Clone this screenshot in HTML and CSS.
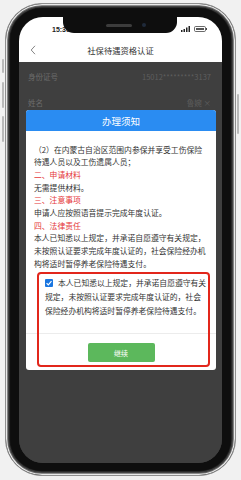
FILE: index.html
```html
<!DOCTYPE html>
<html lang="zh-CN">
<head>
<meta charset="utf-8">
<title>社保待遇资格认证</title>
<link rel="stylesheet" href="styles.css">
</head>
<body>
<div class="stage">
  <div class="phone">
    <span class="side-btn side-btn-a"></span>
    <span class="side-btn side-btn-b"></span>
    <span class="side-btn side-btn-c"></span>
    <span class="side-btn side-btn-r"></span>
    <div class="screen">
      <div class="notch"><span class="speaker"></span><span class="camera"></span></div>
      <header class="top">
        <div class="status">
          <span class="time">15:30</span>
          <span class="status-icons">
            <svg width="11" height="6" viewBox="0 0 11 6"><rect x="0" y="4" width="1.5" height="2" fill="#222"/><rect x="2.5" y="3" width="1.5" height="3" fill="#222"/><rect x="5" y="1.5" width="1.5" height="4.5" fill="#222"/><rect x="7.5" y="0" width="1.5" height="6" fill="#222"/></svg>
            <svg width="13" height="6" viewBox="0 0 13 6"><rect x="0.5" y="0.5" width="11" height="5" rx="1.2" fill="none" stroke="#444" stroke-width="0.8"/><rect x="2" y="2" width="8" height="2" fill="#555"/><rect x="12" y="2" width="1" height="2" fill="#444"/></svg>
          </span>
        </div>
        <div class="nav">
          <svg class="back" width="6" height="10" viewBox="0 0 6 10"><path d="M5 0.8 L1.2 5 L5 9.2" fill="none" stroke="#777" stroke-width="0.9"/></svg>
          <span class="nav-title">社保待遇资格认证</span>
        </div>
      </header>
      <main class="content">
        <div class="row"><span class="label">身份证号</span><span class="value">15012*********3137</span></div>
        <div class="row"><span class="label">姓名</span><span class="value">鲁婉 ×</span></div>
      </main>

      <section class="modal">
        <div class="modal-head">办理须知</div>
        <div class="modal-body">
          <p class="notice">（2）在内蒙古自治区范围内参保并享受工伤保险待遇人员以及工伤遗属人员；</p>
          <p class="notice red">二、申请材料</p>
          <p class="notice">无需提供材料。</p>
          <p class="notice red">三、注意事项</p>
          <p class="notice">申请人应按照语音提示完成年度认证。</p>
          <p class="notice red">四、法律责任</p>
          <p class="notice">本人已知悉以上规定，并承诺自愿遵守有关规定，未按照认证要求完成年度认证的，社会保险经办机构将适时暂停养老保险待遇支付。</p>
          <p class="agree"><span class="check"><svg width="8" height="8" viewBox="0 0 8 8"><path d="M1.6 4.1 L3.3 5.8 L6.5 2.2" fill="none" stroke="#fff" stroke-width="1.2"/></svg></span>本人已知悉以上规定，并承诺自愿遵守有关规定，未按照认证要求完成年度认证的，社会保险经办机构将适时暂停养老保险待遇支付。</p>
        </div>
        <div class="modal-foot"><button class="btn">继续</button></div>
        <div class="mark"></div>
      </section>
    </div>
  </div>
</div>
</body>
</html>
```

FILE: styles.css
```css
html, body {
  margin: 0;
  padding: 0;
}
body {
  width: 241px;
  height: 480px;
  overflow: hidden;
  background: #f1f1f1;
  font-family: "Noto Sans CJK SC", "Noto Sans", sans-serif;
}
.stage {
  padding: 3px 5px 0 5px;
}
.phone {
  position: relative;
  box-sizing: border-box;
  width: 231px;
  height: 473px;
  border: 1px solid #8f8f8f;
  border-radius: 37px;
  background: #0e0e0e;
  padding: 13px 13px 12px 13px;
  box-shadow: inset 0 0 0 1.2px #e9e9e9, inset 0 0 0 2.2px #6a6a6a, inset 0 0 0 3.4px #3a3a3a, inset 0 0 0 4.2px #1a1a1a;
}
.side-btn {
  position: absolute;
  width: 2px;
  background: #b9b9b9;
  border-radius: 1px;
}
.side-btn-a { left: -4px; top: 55px; height: 14px; }
.side-btn-b { left: -4px; top: 78px; height: 26px; }
.side-btn-c { left: -4px; top: 112px; height: 26px; }
.side-btn-r { right: -4px; top: 90px; height: 40px; }

.screen {
  position: relative;
  width: 203px;
  height: 446px;
  border-radius: 24px;
  overflow: hidden;
  background: #3f3f3f;
  display: flex;
  flex-direction: column;
}
.notch {
  position: absolute;
  left: 44px;
  top: 0;
  width: 114px;
  height: 16px;
  background: #0e0e0e;
  border-radius: 0 0 11px 11px;
  display: flex;
  align-items: center;
  justify-content: center;
  gap: 10px;
}
.speaker {
  width: 26px;
  height: 3px;
  border-radius: 2px;
  background: #3c3c3c;
  margin-left: 12px;
}
.camera {
  width: 4px;
  height: 4px;
  border-radius: 50%;
  background: #1f2a3a;
}
.top {
  background: #fff;
  height: 45px;
  flex: none;
}
.status {
  height: 21px;
  display: flex;
  justify-content: space-between;
  align-items: center;
  padding: 3px 15px 0 33px;
  box-sizing: border-box;
}
.time {
  font-family: "Liberation Sans", sans-serif;
  font-weight: bold;
  font-size: 7px;
  color: #222;
}
.status-icons {
  display: flex;
  gap: 2px;
  align-items: center;
}
.nav {
  height: 24px;
  position: relative;
  display: flex;
  align-items: center;
  justify-content: center;
}
.back {
  position: absolute;
  left: 11px;
  top: 7px;
}
.nav-title {
  font-size: 8.3px;
  color: #333;
}
.content {
  flex: 1;
  background: #3f3f3f;
}
.row {
  display: flex;
  justify-content: space-between;
  align-items: center;
  height: 24px;
  padding: 2px 11px 0 9px;
  font-size: 7.5px;
}
.label { color: #6c6c6c; }
.value { color: #5e5e5e; }

.modal {
  position: absolute;
  left: 7px;
  top: 93px;
  width: 190px;
  background: #fff;
  border-radius: 3px;
  overflow: visible;
}
.modal-head {
  height: 21px;
  background: #2a8cf2;
  color: #fff;
  font-size: 9.5px;
  display: flex;
  align-items: center;
  justify-content: center;
  border-radius: 3px 3px 0 0;
}
.modal-body {
  padding: 12.5px 8px 0 8px;
}
.notice {
  margin: 0;
  font-size: 7.8px;
  line-height: 12.67px;
  color: #333;
}
.red { color: #e5383b; }
.agree {
  margin: 6px 0 0 11px;
  font-size: 7.8px;
  line-height: 14px;
  color: #333;
}
.check {
  display: inline-block;
  width: 8px;
  height: 8px;
  background: #1a76e0;
  border-radius: 1px;
  vertical-align: -1px;
  margin-right: 5px;
}
.check svg { display: block; }
.modal-foot {
  margin-top: 15px;
  border-top: 1px solid #ececec;
  padding: 9px 0 8px;
  display: flex;
  justify-content: center;
}
.btn {
  width: 67px;
  height: 19px;
  border: none;
  border-radius: 2px;
  background: #5cb85c;
  color: #fff;
  font-family: "Noto Sans CJK SC", sans-serif;
  font-size: 7px;
  padding: 0;
}
.mark {
  position: absolute;
  left: 11px;
  top: 162px;
  width: 173px;
  height: 95px;
  box-sizing: border-box;
  border: 2px solid #e2261b;
  border-radius: 4px;
  pointer-events: none;
}
```
